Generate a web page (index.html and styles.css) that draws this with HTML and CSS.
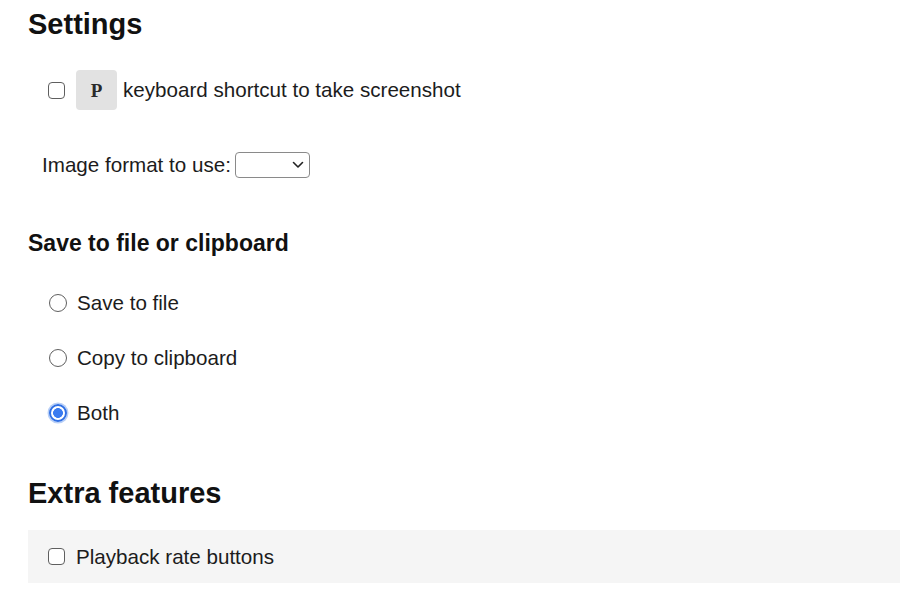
FILE: index.html
```html
<!DOCTYPE html>
<html lang="en">
<head>
<meta charset="utf-8">
<title>Settings</title>
<link rel="stylesheet" href="styles.css">
</head>
<body>
<main class="page">
  <h1 class="title title-top">Settings</h1>

  <label class="row shortcut-row">
    <input type="checkbox" class="check">
    <kbd class="key">P</kbd>
    <span>keyboard shortcut to take screenshot</span>
  </label>

  <div class="row format-row">
    <span>Image format to use:</span>
    <span class="select-wrap">
      <select class="select" aria-label="Image format"></select>
      <svg class="chevron" width="12" height="8" viewBox="0 0 12 8"><path d="M1.5 1.5 L6 6 L10.5 1.5" fill="none" stroke="#222" stroke-width="1.6" stroke-linecap="round" stroke-linejoin="round"/></svg>
    </span>
  </div>

  <h2 class="subtitle">Save to file or clipboard</h2>

  <div class="radios">
    <label class="row radio-row"><input type="radio" name="save" class="radio"><span>Save to file</span></label>
    <label class="row radio-row"><input type="radio" name="save" class="radio"><span>Copy to clipboard</span></label>
    <label class="row radio-row"><input type="radio" name="save" class="radio" checked><span>Both</span></label>
  </div>

  <h1 class="title title-extra">Extra features</h1>

  <div class="feature-box">
    <label class="row feature-row">
      <input type="checkbox" class="check">
      <span>Playback rate buttons</span>
    </label>
  </div>
</main>
</body>
</html>
```
FILE: styles.css
```css
html, body {
  margin: 0;
  padding: 0;
  background: #ffffff;
}

body {
  font-family: "Liberation Sans", Arial, sans-serif;
  font-size: 20.6px;
  color: #1c1c1c;
  overflow: hidden;
}

.page {
  padding-left: 28px;
  display: flex;
  flex-direction: column;
  align-items: stretch;
}

.title {
  font-size: 29px;
  font-weight: 700;
  line-height: 32px;
  margin: 0;
  color: #111;
}

.title-top {
  margin-top: 8px;
}

.title-extra {
  margin-top: 52px;
}

.subtitle {
  font-size: 23px;
  font-weight: 700;
  line-height: 28px;
  margin: 51px 0 0 0;
  color: #111;
}

.row {
  display: flex;
  align-items: center;
  line-height: 24px;
}

.shortcut-row {
  margin-top: 30px;
  padding-left: 20px;
  height: 40px;
}

.check {
  appearance: none;
  -webkit-appearance: none;
  width: 17px;
  height: 17px;
  margin: 0 11px 0 0;
  border: 1.5px solid #5f5f5f;
  border-radius: 4px;
  background: #fff;
  box-sizing: border-box;
  flex: none;
}

.key {
  width: 41px;
  height: 40px;
  margin-right: 6px;
  border-radius: 4px;
  background: #e2e2e2;
  display: flex;
  align-items: center;
  justify-content: center;
  font-family: "Liberation Serif", "Times New Roman", serif;
  font-size: 19px;
  font-weight: 700;
  color: #2a2a2a;
  padding-top: 2px;
  box-sizing: border-box;
  flex: none;
}

.format-row {
  margin-top: 42px;
  padding-left: 14px;
  height: 26px;
}

.select-wrap {
  position: relative;
  margin-left: 4px;
  display: inline-flex;
}

.select {
  appearance: none;
  -webkit-appearance: none;
  width: 75px;
  height: 26px;
  border: 1px solid #8a8a8a;
  border-radius: 4px;
  background: #fff;
  margin: 0;
  padding: 0;
}

.chevron {
  position: absolute;
  right: 6px;
  top: 9px;
  pointer-events: none;
}

.radios {
  display: flex;
  flex-direction: column;
  gap: 31px;
  margin-top: 34px;
  padding-left: 21px;
}

.radio-row {
  height: 24px;
}

.radio {
  appearance: none;
  -webkit-appearance: none;
  width: 18px;
  height: 18px;
  margin: 0 10px 0 0;
  border: 1.5px solid #5f5f5f;
  border-radius: 50%;
  background: #fff;
  box-sizing: border-box;
  flex: none;
}

.radio:checked {
  border: 2px solid #2f6fe4;
  background: radial-gradient(circle, #3a7bf0 0 4.6px, #ffffff 5.2px);
  box-shadow: 0 0 0 1.5px #b9d0f7;
}

.feature-box {
  margin-top: 21px;
  height: 53px;
  background: #f5f5f5;
  display: flex;
  align-items: center;
  padding-left: 20px;
}

.feature-row {
  height: 24px;
}
```
